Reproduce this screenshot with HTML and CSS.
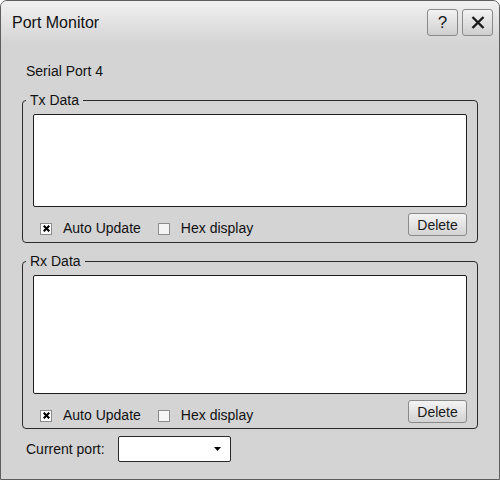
FILE: index.html
```html
<!DOCTYPE html>
<html>
<head>
<meta charset="utf-8">
<title>Port Monitor</title>
<link rel="stylesheet" href="styles.css">
</head>
<body>
<div class="window">
  <div class="titlebar">
    <span class="title">Port Monitor</span>
    <div class="tbtns">
      <button class="tbtn help">?</button>
      <button class="tbtn close"><svg width="14" height="13" viewBox="0 0 14 13"><path d="M1.5 1 L12.5 12 M12.5 1 L1.5 12" stroke="#1a1a1a" stroke-width="2.4" fill="none"/></svg></button>
    </div>
  </div>
  <div class="content">
    <div class="port-name">Serial Port 4</div>

    <fieldset class="group tx">
      <legend>Tx Data</legend>
      <div class="textarea tx-area"></div>
      <div class="controls">
        <div class="checks">
          <label class="check"><span class="box checked"><svg width="7" height="7" viewBox="0 0 7 7"><path d="M0.7 0.7 L6.3 6.3 M6.3 0.7 L0.7 6.3" stroke="#000" stroke-width="2.1"/></svg></span>Auto Update</label>
          <label class="check hex"><span class="box"></span>Hex display</label>
        </div>
        <button class="btn">Delete</button>
      </div>
    </fieldset>

    <fieldset class="group rx">
      <legend>Rx Data</legend>
      <div class="textarea rx-area"></div>
      <div class="controls">
        <div class="checks">
          <label class="check"><span class="box checked"><svg width="7" height="7" viewBox="0 0 7 7"><path d="M0.7 0.7 L6.3 6.3 M6.3 0.7 L0.7 6.3" stroke="#000" stroke-width="2.1"/></svg></span>Auto Update</label>
          <label class="check hex"><span class="box"></span>Hex display</label>
        </div>
        <button class="btn">Delete</button>
      </div>
    </fieldset>

    <div class="port-row">
      <span class="port-label">Current port:</span>
      <div class="select"><svg width="7" height="4" viewBox="0 0 7 4"><path d="M0 0 L7 0 L3.5 4 Z" fill="#000"/></svg></div>
    </div>
  </div>
</div>
</body>
</html>
```
FILE: styles.css
```css
html, body {
  margin: 0;
  padding: 0;
  background: #ffffff;
}

body {
  font-family: "Liberation Sans", Arial, sans-serif;
  font-size: 14px;
  color: #111;
}

.window {
  width: 500px;
  height: 480px;
  box-sizing: border-box;
  border: 1px solid #5e5e5e;
  border-radius: 7px 7px 0 0;
  background: #d4d4d4;
  overflow: hidden;
}

.titlebar {
  height: 42px;
  display: flex;
  justify-content: space-between;
  align-items: flex-start;
  padding: 8px 6px 0 11px;
  box-sizing: border-box;
  background: linear-gradient(#f1f1f1, #d4d4d4);
}

.title {
  font-size: 16px;
  line-height: 18px;
  margin-top: 5px;
  color: #111;
}

.tbtns {
  display: flex;
  gap: 4px;
}

.tbtn {
  width: 31px;
  height: 27px;
  box-sizing: border-box;
  border: 1px solid #8a8a8a;
  border-radius: 3px;
  background: linear-gradient(#f3f3f3, #cfcfcf);
  padding: 0;
  margin: 0;
  display: flex;
  align-items: center;
  justify-content: center;
  font-family: "Liberation Sans", Arial, sans-serif;
  font-size: 17px;
  color: #1a1a1a;
}

.content {
  padding: 0 21px;
}

.port-name {
  line-height: 16px;
  margin-top: 20px;
  padding-left: 4px;
}

.group {
  margin: 0;
  border: 1px solid #2a2a2a;
  border-radius: 4px;
  padding: 0 10px 6px 10px;
  min-width: 0;
}

.group legend {
  font-size: 14px;
  line-height: 16px;
  padding: 0 4px 0 4px;
  margin-left: -7px;
}

.group.tx {
  margin-top: 13px;
}

.group.rx {
  margin-top: 10px;
  padding-bottom: 5px;
}

.textarea {
  background: #ffffff;
  border: 1px solid #1e1e1e;
  border-radius: 2px;
  box-sizing: border-box;
  margin-top: 6px;
}

.tx-area {
  height: 93px;
}

.rx-area {
  height: 119px;
}

.controls {
  display: flex;
  justify-content: space-between;
  align-items: flex-start;
  height: 23px;
  margin-top: 6px;
}

.checks {
  display: flex;
  margin-top: 8px;
  padding-left: 7px;
}

.check {
  display: flex;
  align-items: center;
  line-height: 15px;
}

.check.hex {
  margin-left: 17px;
}

.box {
  width: 12px;
  height: 12px;
  box-sizing: border-box;
  border: 1px solid #8c8c8c;
  background: #f5f5f5;
  margin-right: 11px;
  display: flex;
  align-items: center;
  justify-content: center;
}

.box.checked {
  background: #ffffff;
}

.btn {
  width: 59px;
  height: 23px;
  box-sizing: border-box;
  border: 1px solid #8a8a8a;
  border-radius: 3px;
  background: linear-gradient(#f4f4f4, #d3d3d3);
  font-family: "Liberation Sans", Arial, sans-serif;
  font-size: 14px;
  color: #1a1a1a;
  padding: 0;
  margin: 0;
}

.port-row {
  display: flex;
  align-items: center;
  margin-top: 7px;
  padding-left: 4px;
}

.port-label {
  width: 92px;
  line-height: 16px;
}

.select {
  width: 113px;
  height: 26px;
  box-sizing: border-box;
  background: #ffffff;
  border: 1px solid #2a2a2a;
  border-radius: 2px;
  display: flex;
  align-items: center;
  justify-content: flex-end;
  padding-right: 9px;
}
```
